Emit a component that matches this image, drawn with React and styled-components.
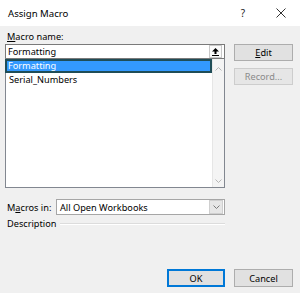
import React from "react"
import styled, { createGlobalStyle } from "styled-components"

const Global = createGlobalStyle`
  html, body { margin: 0; padding: 0; background: #f0f0f0; }
  body { font-family: "Noto Sans", "Open Sans", sans-serif; font-size: 9.2px; color: #000; }
`

const Dialog = styled.div`
  width: 300px;
  height: 293px;
  background: #f0f0f0;
  display: flex;
  flex-direction: column;
  overflow: hidden;
`

const TitleBar = styled.div`
  height: 26px;
  background: #fff;
  display: flex;
  align-items: center;
  padding-left: 8px;
  font-size: 9.6px;
`

const Title = styled.div`
  flex: 1;
`

const TitleButton = styled.div`
  width: ${p => p.$w}px;
  display: flex;
  justify-content: center;
  font-size: 10px;
  color: #222;
`

const Body = styled.div`
  display: flex;
  padding: 0 7px 0 5px;
  gap: 9px;
`

const LeftCol = styled.div`
  width: 221px;
  display: flex;
  flex-direction: column;
`

const RightCol = styled.div`
  flex: 1;
  display: flex;
  flex-direction: column;
  gap: 7px;
  padding-top: 18px;
`

const Label = styled.div`
  height: 14px;
  padding-top: 4px;
  line-height: 14px;
  padding-left: 2px;
  u { text-decoration: underline; }
`

const NameBox = styled.div`
  height: 13px;
  border: 1px solid #7a7a7a;
  border-bottom: none;
  background: #fff;
  display: flex;
  align-items: center;
  padding-left: 2px;
`

const NameText = styled.div`
  flex: 1;
  line-height: 13px;
`

const UpButton = styled.div`
  width: 11px;
  height: 11px;
  margin-right: 2px;
  border: 1px solid #c8c8c8;
  background: #fafafa;
  display: flex;
  align-items: center;
  justify-content: center;
`

const List = styled.div`
  height: 128px;
  border: 1px solid #828790;
  border-top-color: #7a7a7a;
  background: #fff;
  display: flex;
`

const Items = styled.div`
  flex: 1;
  display: flex;
  flex-direction: column;
`

const Item = styled.div`
  height: 12px;
  line-height: 12px;
  padding-left: 2px;
  margin-left: ${p => (p.$selected ? -1 : 0)}px;
  color: ${p => (p.$selected ? "#fff" : "#000")};
  background: ${p => (p.$selected ? "#3399ff" : "transparent")};
  border: 1px solid ${p => (p.$selected ? "#1f4d57" : "transparent")};
  outline: ${p => (p.$selected ? "1px solid #1f4d57" : "none")};
  outline-offset: -2px;
`

const ScrollBar = styled.div`
  width: 11px;
  background: #f4f4f4;
  border-left: 1px solid #e6e6e6;
  display: flex;
  flex-direction: column;
  justify-content: space-between;
  align-items: center;
  padding: 8px 0 4px;
`

const Row = styled.div`
  display: flex;
  align-items: center;
  margin-top: ${p => p.$top || 0}px;
`

const RowLabel = styled.div`
  width: 49px;
  padding-left: 2px;
  white-space: nowrap;
  u { text-decoration: underline; }
`

const Select = styled.div`
  flex: 1;
  height: 14px;
  border: 1px solid #a6a6a6;
  background: #fff;
  display: flex;
  align-items: center;
`

const SelectText = styled.div`
  flex: 1;
  padding-left: 3px;
`

const SelectArrow = styled.div`
  width: 12px;
  height: 12px;
  margin-right: 1px;
  background: #e6e6e6;
  border: 1px solid #cfcfcf;
  display: flex;
  align-items: center;
  justify-content: center;
`

const Rule = styled.div`
  flex: 1;
  height: 0;
  border-top: 1px solid #dcdcdc;
  border-bottom: 1px solid #fff;
  margin-left: 4px;
`

const Button = styled.div`
  width: ${p => p.$w || 57}px;
  height: ${p => p.$h || 16}px;
  box-sizing: border-box;
  border: 1px solid ${p => (p.$default ? "#0078d7" : p.$disabled ? "#cdcdcd" : "#adadad")};
  box-shadow: ${p => (p.$default ? "inset 0 0 0 1px #0078d7" : "none")};
  background: ${p => (p.$disabled ? "#e6e6e6" : "#e1e1e1")};
  color: ${p => (p.$disabled ? "#8a8a8a" : "#000")};
  display: flex;
  align-items: center;
  justify-content: center;
  u { text-decoration: underline; }
`

const Footer = styled.div`
  margin-top: auto;
  display: flex;
  justify-content: flex-end;
  gap: 9px;
  padding: 0 7px 6px 0;
`

const Chevron = ({ down, color = "#b5b5b5" }) => (
  <svg width="7" height="4" viewBox="0 0 7 4">
    <path d={down ? "M0.5 0.5 L3.5 3.5 L6.5 0.5" : "M0.5 3.5 L3.5 0.5 L6.5 3.5"} fill="none" stroke={color} strokeWidth="1" />
  </svg>
)

const UpBar = () => (
  <svg width="7" height="8" viewBox="0 0 7 8">
    <path d="M3.5 0 L7 3.5 L4.5 3.5 L4.5 6 L2.5 6 L2.5 3.5 L0 3.5 Z" fill="#000" />
    <rect x="0" y="7" width="7" height="1" fill="#000" />
  </svg>
)

const CloseIcon = () => (
  <svg width="10" height="10" viewBox="0 0 10 10">
    <path d="M0.5 0.5 L9.5 9.5 M9.5 0.5 L0.5 9.5" stroke="#333" strokeWidth="1" fill="none" />
  </svg>
)

export default function App() {
  return (
    <>
      <Global />
      <Dialog>
        <TitleBar>
          <Title>Assign Macro</Title>
          <TitleButton $w={12}>?</TitleButton>
          <TitleButton $w={26} />
          <TitleButton $w={12}>
            <CloseIcon />
          </TitleButton>
          <TitleButton $w={13} />
        </TitleBar>
        <Body>
          <LeftCol>
            <Label>
              <u>M</u>acro name:
            </Label>
            <NameBox>
              <NameText>Formatting</NameText>
              <UpButton>
                <UpBar />
              </UpButton>
            </NameBox>
            <List>
              <Items>
                <Item $selected>Formatting</Item>
                <Item>Serial_Numbers</Item>
              </Items>
              <ScrollBar>
                <Chevron />
                <Chevron down />
              </ScrollBar>
            </List>
            <Row $top={11}>
              <RowLabel>
                M<u>a</u>cros in:
              </RowLabel>
              <Select>
                <SelectText>All Open Workbooks</SelectText>
                <SelectArrow>
                  <Chevron down color="#7a7a7a" />
                </SelectArrow>
              </Select>
            </Row>
            <Row $top={2}>
              <RowLabel style={{ width: "auto" }}>Description</RowLabel>
              <Rule />
            </Row>
          </LeftCol>
          <RightCol>
            <Button $w={59} $h={17}>
              <u>E</u>dit
            </Button>
            <Button $w={59} $h={17} $disabled>
              Record...
            </Button>
          </RightCol>
        </Body>
        <Footer>
          <Button $w={58} $h={18} $default>
            OK
          </Button>
          <Button $w={59} $h={18}>
            Cancel
          </Button>
        </Footer>
      </Dialog>
    </>
  )
}
